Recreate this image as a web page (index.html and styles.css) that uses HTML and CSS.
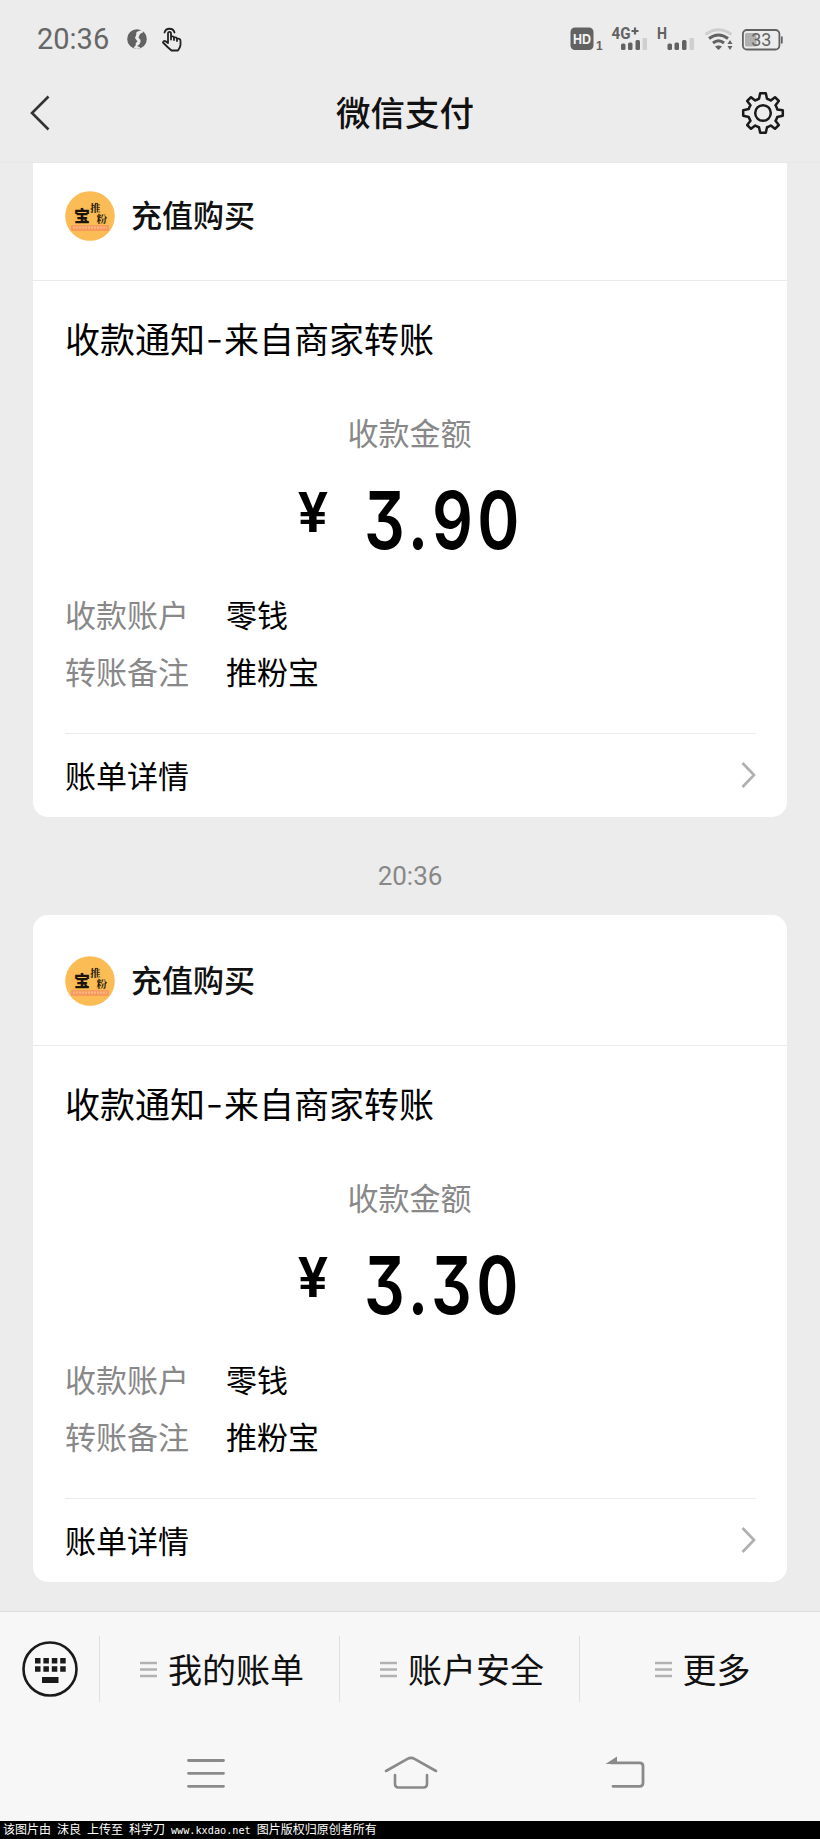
FILE: index.html
```
<!DOCTYPE html>
<html lang="zh-CN">
<head>
<meta charset="utf-8">
<title>微信支付</title>
<link rel="stylesheet" href="styles.css">
</head>
<body>
<svg width="0" height="0" class="defs" aria-hidden="true">
  <symbol id="chevron" viewBox="0 0 16 28"><path d="M2.500 2L14 14L2.500 26" fill="none" stroke="#b0b0b0" stroke-width="2.700"/></symbol>
  <symbol id="lines" viewBox="0 0 17 17"><path d="M0 2H17M0 8.500H17M0 15H17" fill="none" stroke="#b2b2b2" stroke-width="2.300"/></symbol>
</svg>
<div class="screen">
  <header class="top">
    <div class="status">
      <span class="clock">20:36</span>
      <svg class="globe" width="20" height="20" viewBox="0 0 20 20"><circle cx="10" cy="10" r="9.800" fill="#626262"/><path d="M9.500 3L14.500 1L16.500 3L13 5L11.500 8.500L13.500 11Q14 15 10 17L13.500 18.500L10 20L6.500 18.500L9 16Q7.500 14.500 10.500 12.500L8 9Q9.500 6.500 9.500 3Z" fill="#ececec"/></svg>
      <svg class="tap" width="20" height="25" viewBox="0 0 20 25" fill="none" stroke="#222" stroke-width="1.800" stroke-linejoin="round" stroke-linecap="round"><path d="M2.500 5.500A5.200 5.200 0 0 1 12.500 5.500"/><path d="M6 16V6.500Q6 4.800 7.500 4.800T9 6.500V12.500V9.500Q11.800 8.700 12 11V13V10.500Q14.800 9.700 15 12V14V11.800Q18.500 11 18.500 14V18Q18 21 16 23.500H9.500L5.500 20L1 15.500Q1.500 13 4 14.500L6 16"/></svg>
      <div class="signals">
        <svg width="33" height="30" viewBox="571 24 33 30"><rect x="571.500" y="27.500" width="23" height="22.500" rx="4.500" fill="#626262"/><text x="583" y="44" text-anchor="middle" class="hd" textLength="18" lengthAdjust="spacingAndGlyphs">HD</text><text x="597" y="49.500" class="sim">1</text></svg>
        <svg width="37" height="30" viewBox="612 24 37 30"><text x="612.500" y="38.500" class="net" textLength="19" lengthAdjust="spacingAndGlyphs">4G</text><path d="M632.500 31H639.500M636 27.500V34.500" stroke="#626262" stroke-width="2.200"/><g fill="#626262"><rect x="622" y="43.500" width="4.500" height="6.500" rx="1.500"/><rect x="629" y="42.500" width="4.500" height="7.500" rx="1.500"/><rect x="636.500" y="40" width="4.500" height="10" rx="1.500"/></g><rect x="643.500" y="38" width="4.500" height="12" rx="1" fill="#cfcfcf"/></svg>
        <svg width="37" height="30" viewBox="657 24 37 30"><text x="657" y="38.500" class="net" textLength="10" lengthAdjust="spacingAndGlyphs">H</text><g fill="#626262"><rect x="667.500" y="43.500" width="4.500" height="6.500" rx="1.500"/><rect x="674.500" y="42.500" width="4.500" height="7.500" rx="1.500"/><rect x="682" y="40" width="4.500" height="10" rx="1.500"/></g><rect x="689.500" y="38" width="4.500" height="12" rx="1" fill="#cfcfcf"/></svg>
        <svg width="29" height="30" viewBox="703 24 29 30" fill="none"><path d="M704.500 34.500Q717.500 25 730.500 34.500" stroke="#cfcfcf" stroke-width="3"/><path d="M708 38.500Q717.500 31.500 727 38.500M712 43Q717.500 38.500 723 43" stroke="#626262" stroke-width="3"/><path d="M714 46.500Q717.500 44.500 721 46.500L717.500 50ZM726.500 44L729 40L731.500 44ZM726.500 46L729 50L731.500 46Z" fill="#626262"/></svg>
        <svg width="42" height="30" viewBox="743 24 42 30"><rect x="743.900" y="30" width="36.500" height="19.500" rx="4" fill="none" stroke="#626262" stroke-width="1.800"/><rect x="746" y="33" width="11.500" height="13.500" rx="1.500" fill="#b0b0b0"/><path d="M782.800 36.500V43.500" stroke="#626262" stroke-width="1.800"/><text x="762.300" y="45.800" text-anchor="middle" class="bat">33</text></svg>
      </div>
    </div>
    <nav class="bar">
      <svg width="21" height="36" viewBox="0 0 21 36"><path d="M19.500 1.500L3 18L19.500 34.500" fill="none" stroke="#333" stroke-width="2.600"/></svg>
      <h1>微信支付</h1>
      <svg width="44" height="44" viewBox="-22 -22 44 44" fill="none" stroke="#1a1a1a" stroke-width="2.500" stroke-linejoin="round"><circle r="7.800"/><path d="M-2.800 -19.800H2.800L4 -14.300Q6.500 -13.500 7.800 -12.500L12 -15.800L15.800 -12L12.500 -7.800Q13.800 -5.500 14.300 -3.500L19.800 -2.800V2.800L14.300 4Q13.500 6.500 12.500 7.800L15.800 12L12 15.800L7.800 12.500Q5.500 13.800 4 14.300L2.800 19.800H-2.800L-4 14.300Q-6.500 13.500 -7.800 12.500L-12 15.800L-15.800 12L-12.500 7.800Q-13.800 5.500 -14.300 4L-19.800 2.800V-2.800L-14.300 -4Q-13.500 -6.500 -12.500 -7.800L-15.800 -12L-12 -15.800L-7.800 -12.500Q-5.500 -13.800 -4 -14.300Z"/></svg>
    </nav>
  </header>

  <main class="chat">
    <article class="card">
      <div class="merchant">
        <svg class="avatar" width="50" height="50" viewBox="0 0 50 50"><circle cx="25" cy="25" r="24.800" fill="#fbbc55"/><rect x="6" y="34" width="38" height="6" rx="1" fill="#f79a5c"/><path d="M8 36.500H42" stroke="#f9b98a" stroke-width="2" stroke-dasharray="2 1"/><text x="9" y="31" class="a1">宝</text><text x="25" y="21" class="a2">推</text><text x="31.500" y="31.500" class="a2">粉</text></svg>
        <span>充值购买</span>
      </div>
      <div class="body">
        <h2>收款通知<i>-</i>来自商家转账</h2>
        <p class="label">收款金额</p>
        <p class="amount"><span class="yen">¥</span><span class="sum">3.90</span></p>
        <dl><dt>收款账户</dt><dd>零钱</dd><dt>转账备注</dt><dd>推粉宝</dd></dl>
        <div class="detail"><span>账单详情</span><svg width="16" height="28"><use href="#chevron"/></svg></div>
      </div>
    </article>
    <time>20:36</time>
    <article class="card">
      <div class="merchant">
        <svg class="avatar" width="50" height="50" viewBox="0 0 50 50"><circle cx="25" cy="25" r="24.800" fill="#fbbc55"/><rect x="6" y="34" width="38" height="6" rx="1" fill="#f79a5c"/><path d="M8 36.500H42" stroke="#f9b98a" stroke-width="2" stroke-dasharray="2 1"/><text x="9" y="31" class="a1">宝</text><text x="25" y="21" class="a2">推</text><text x="31.500" y="31.500" class="a2">粉</text></svg>
        <span>充值购买</span>
      </div>
      <div class="body">
        <h2>收款通知<i>-</i>来自商家转账</h2>
        <p class="label">收款金额</p>
        <p class="amount"><span class="yen">¥</span><span class="sum">3.30</span></p>
        <dl><dt>收款账户</dt><dd>零钱</dd><dt>转账备注</dt><dd>推粉宝</dd></dl>
        <div class="detail"><span>账单详情</span><svg width="16" height="28"><use href="#chevron"/></svg></div>
      </div>
    </article>
  </main>

  <footer class="bottom">
    <div class="menu">
      <div class="keys"><svg width="56" height="56" viewBox="0 0 56 56"><circle cx="28" cy="28" r="26.500" fill="none" stroke="#1a1a1a" stroke-width="2.600"/><path d="M13 19.800H44M13 28H44" stroke="#1a1a1a" stroke-width="5.500" stroke-dasharray="5.500 2.900"/><path d="M20 39H36.500" stroke="#1a1a1a" stroke-width="6"/></svg></div>
      <div class="item"><svg width="17" height="17"><use href="#lines"/></svg>我的账单</div>
      <div class="item"><svg width="17" height="17"><use href="#lines"/></svg>账户安全</div>
      <div class="item last"><svg width="17" height="17"><use href="#lines"/></svg>更多</div>
    </div>
    <div class="system">
      <svg width="38" height="36" viewBox="0 0 38 36"><path d="M1.500 5.500H36.500M1.500 18.300H36.500M1.500 31.300H36.500" stroke="#8a8a8a" stroke-width="2.800" stroke-linecap="round"/></svg>
      <svg class="home" width="54" height="36" viewBox="0 0 54 36" fill="none" stroke="#8a8a8a" stroke-width="2.600" stroke-linecap="round"><path d="M2 16L23.500 3.800Q27 2 30.500 3.800L52 16M11 20V29Q11 32.500 14.500 32.500H39.500Q43 32.500 43 29V20"/></svg>
      <svg width="40" height="36" viewBox="0 0 40 36"><path d="M8 31.300H34.500Q38 31.300 38 28V11Q38 7.800 34.500 7.800H6" fill="none" stroke="#8a8a8a" stroke-width="2.800" stroke-linecap="round"/><path d="M.5 9L12 1.500V9Z" fill="#8a8a8a"/></svg>
    </div>
  </footer>
  <div class="credit">该图片由 沫良 上传至 科学刀 <span>www.kxdao.net</span> 图片版权归原创者所有</div>
</div>
</body>
</html>
```
FILE: styles.css
```
* { box-sizing: border-box; margin: 0; padding: 0; }
body { font-family: "Noto Sans CJK SC", sans-serif; background: #ececec; color: #111; }
.defs { position: absolute; }
svg { display: block; flex: none; }
.screen { width: 820px; height: 1839px; display: flex; flex-direction: column; overflow: hidden; background: #ececec; }

.top { height: 163px; flex: none; border-bottom: 1px solid #e8e8e8; }
.status { height: 78px; display: flex; align-items: center; padding: 0 36px 0 37px; }
.clock { width: 90px; font: 29px/36px Roboto, sans-serif; color: #666; }
.tap { margin-left: 15px; }
.signals { display: flex; gap: 9px; margin-left: auto; }
.signals svg:nth-child(2), .signals svg:nth-child(3) { position: relative; left: -1px; }
.hd { font: 700 15px "Liberation Sans", sans-serif; fill: #f4f4f4; }
.sim { font: 700 12px "Liberation Sans", sans-serif; fill: #626262; }
.net { font: 700 16px Roboto, sans-serif; fill: #626262; }
.bat { font: 18px Roboto, sans-serif; fill: #626262; }
.bar { height: 70px; display: flex; align-items: center; justify-content: space-between; padding: 0 35px 0 29px; }
.bar h1 { font-size: 34.500px; line-height: 50px; font-weight: 500; margin: -5px 0 0 19px; }

.chat { flex: 1; min-height: 0; overflow: hidden; padding: 0 33px; }
.card { height: 667px; background: #fff; border-radius: 15px; }
.card:first-child { margin-top: -13px; }
.merchant { height: 131px; display: flex; align-items: center; gap: 16px; padding: 1px 32px 0; border-bottom: 1px solid #ebebeb; }
.merchant span { font-size: 31px; line-height: 44px; font-weight: 500; margin-top: -4px; }
.a1 { font: 900 16px "Noto Sans CJK SC", sans-serif; fill: #1c1408; }
.a2 { font: 700 10.500px "Noto Serif CJK SC", "Noto Sans CJK SC", serif; fill: #1c1408; }
.body { padding: 32px 31px 0 32px; }
.body h2 { height: 50px; font-size: 35px; line-height: 50px; font-weight: 400; color: #000; white-space: nowrap; }
.body h2 i { display: inline-block; width: 19px; text-align: center; font-style: normal; transform: scaleX(1.35) translateY(-2px); }
.label { margin: 45px 2px 0 0; height: 48px; line-height: 48px; font-size: 31px; color: #888; text-align: center; }
.amount { display: flex; height: 118px; line-height: 128px; padding-left: 233px; font-family: Inter, sans-serif; font-weight: 600; font-size: 80px; color: #000; white-space: nowrap; }
.sum { letter-spacing: 5.500px; font-feature-settings: "cv09"; transform: scaleX(.8); transform-origin: left; }
.yen { width: 66px; font-size: 56px; line-height: 115px; font-family: Roboto, sans-serif; }
dl { display: grid; grid-template-columns: 161px 1fr; grid-auto-rows: 56.500px; align-items: center; font-size: 31px; line-height: 44px; margin-top: 12px; }
dt { color: #888; }
dd { color: #000; }
.detail { display: flex; align-items: center; justify-content: space-between; margin-top: 34px; height: 83px; border-top: 1px solid #ebebeb; font-size: 31px; line-height: 44px; color: #000; }
time { display: block; height: 98px; line-height: 118px; text-align: center; font-size: 26px; font-family: Roboto, sans-serif; color: #888; }

.bottom { height: 210px; flex: none; background: #f7f7f7; border-top: 1px solid #dedede; }
.menu { display: flex; padding-top: 24px; height: 114px; }
.keys { width: 99px; height: 66px; padding: 5px 0 0 22px; }
.item { width: 240px; height: 66px; display: flex; align-items: center; justify-content: center; gap: 11px; border-left: 1px solid #e0e0e0; font-size: 34px; line-height: 48px; color: #111; padding-left: 5px; }
.item.last { width: 241px; padding-left: 5px; }
.system { display: flex; justify-content: space-between; padding: 29px 175px 0 187px; }
.home { margin-left: -8px; }

.credit { height: 18px; flex: none; background: #000; color: #fff; font-size: 12px; line-height: 16px; padding-left: 3px; word-spacing: 3.300px; white-space: nowrap; }
.credit span { font-family: "DejaVu Sans Mono", monospace; font-size: 10.200px; }
```
